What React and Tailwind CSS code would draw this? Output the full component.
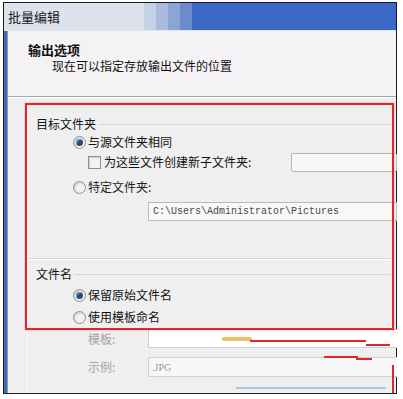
import React from "react";

const cjk = "font-['Noto_Sans_CJK_SC','Noto_Sans',sans-serif]";

function Radio({ checked }) {
  return (
    <span className="flex h-[13px] w-[13px] shrink-0 items-center justify-center rounded-full border border-[#8e9296] bg-[#f2f2f2] shadow-[inset_1px_1px_2px_#c8c8c8]">
      {checked && <span className="h-[7px] w-[7px] rounded-full bg-[#2a4b6c] shadow-[inset_1px_1px_1px_#86a9c6]" />}
    </span>
  );
}

function Checkbox() {
  return <span className="h-[13px] w-[13px] shrink-0 border border-[#8f8f8f] bg-[#f4f4f4] shadow-[inset_1px_1px_2px_#cdcdcd]" />;
}

function SectionTitle({ children }) {
  return (
    <div className="flex h-[14px] items-center">
      <span className="pl-[8px] pr-[2px] leading-[14px]">{children}</span>
      <span className="h-px flex-1 bg-[#d6d6d6]" />
    </div>
  );
}

function Option({ checked, children, className = "" }) {
  return (
    <div className={`flex h-[14px] items-center pl-[45px] ${className}`}>
      <Radio checked={checked} />
      <span className="pl-[2px] leading-[14px]">{children}</span>
    </div>
  );
}

export default function App() {
  return (
    <div className={`h-[399px] w-[403px] bg-white pl-[3px] pt-[2px] text-[12px] text-[#111] ${cjk}`}>
      <div className="relative flex h-[392px] w-[394px] flex-col border border-[#1b1b1b]">
        {/* title bar: pale behind the caption, Aero blue toward the right */}
        <div className="flex h-[28px] w-full shrink-0 border-b border-[#dfe6f0]">
          <div className="flex w-[140px] items-center bg-[#dde3ec] pl-[4px] text-[13px] leading-[14px] text-[#1a1a1a]">
            批量编辑
          </div>
          <div className="w-[12px] bg-[#c6d2e5]" />
          <div className="w-[12px] bg-[#a9bcde]" />
          <div className="w-[12px] bg-[#8aa5d6]" />
          <div className="w-[12px] bg-[#6b8ccc]" />
          <div className="w-[68px] bg-slate-500">
            <div className="h-full bg-blue-600/50" />
          </div>
          <div className="w-[68px] bg-slate-500">
            <div className="h-full bg-blue-600/50" />
          </div>
          <div className="w-[68px] bg-slate-500">
            <div className="h-full bg-blue-600/50" />
          </div>
        </div>

        <div className="flex flex-1 border-l-[3px] border-[#3d6cc0]">
          <div className="flex flex-1 flex-col border-l border-[#9a9a9a]">
            {/* header */}
            <div className="h-[66px] border-b border-[#a8a8a8] bg-[#f4f2f4] pl-[20px] pt-[12px]">
              <div className="text-[13px] font-bold leading-[14px]">输出选项</div>
              <div className="pl-[24px] pt-[2px] leading-[14px]">现在可以指定存放输出文件的位置</div>
            </div>

            {/* body */}
            <div className="flex flex-1 flex-col border-t border-white bg-[#efeff0] pl-[19px] pr-[5px]">
              <div className="flex flex-1 flex-col border-l border-[#fbfbfb]">
                <div className="mt-[19px]">
                  <SectionTitle>目标文件夹</SectionTitle>
                </div>
                <Option checked className="mt-[4px]">与源文件夹相同</Option>
                <div className="mt-[3px] flex h-[20px] items-center pl-[60px]">
                  <Checkbox />
                  <span className="pl-[3px] leading-[14px]">为这些文件创建新子文件夹:</span>
                  <span className="ml-auto mr-[-6px] h-[19px] w-[106px] rounded-[2px] border border-[#b7b7b7] bg-[#f7f7f7]" />
                </div>
                <Option className="mt-[8px] text-[#222]">特定文件夹:</Option>
                <div className="mt-[8px] flex pl-[120px]">
                  <div className="mr-[-6px] flex h-[19px] flex-1 items-center border border-[#b9b9b9] bg-[#f8f8f8] pl-[4px] font-['Liberation_Mono',monospace] text-[10px] text-[#4a4a4a]">
                    C:\Users\Administrator\Pictures
                  </div>
                </div>

                <div className="mt-[37px] h-px bg-[#d8d8d8]" />
                <div className="h-px bg-white" />

                <div className="mt-[7px]">
                  <SectionTitle>文件名</SectionTitle>
                </div>
                <Option checked className="mt-[7px]">保留原始文件名</Option>
                <Option className="mt-[8px]">使用模板命名</Option>

                <div className="mt-[5px] flex h-[19px] items-center pl-[60px] text-[#a4a4a4]">
                  <span className="w-[60px] leading-[14px]">模板:</span>
                  <span className="mr-[-6px] h-[19px] flex-1 border border-r-0 border-[#cfcfcf] bg-white" />
                </div>
                <div className="mt-[9px] flex h-[20px] items-center pl-[60px] text-[#a4a4a4]">
                  <span className="w-[60px] leading-[14px]">示例:</span>
                  <span className="mr-[-6px] flex h-[20px] flex-1 items-center border border-r-0 border-[#cfcfcf] bg-[#f7f7f7] pl-[3px] font-['Liberation_Serif',serif] text-[10px] text-[#9a9a9a]">
                    .JPG
                  </span>
                </div>
              </div>
            </div>
          </div>
        </div>

        {/* red annotation */}
        <div className="pointer-events-none absolute left-[21px] top-[100px] h-[227px] w-[369px] border-2 border-[#e1252b] shadow-[0_0_2px_#f3a0a0]" />
        <div className="pointer-events-none absolute left-[218px] top-[334px] h-[4px] w-[30px] rounded-full bg-[#f0c060]" />
        <div className="pointer-events-none absolute left-[246px] top-[337px] h-[2px] w-[116px] bg-[#e1252b]" />
        <div className="pointer-events-none absolute left-[362px] top-[341px] h-[2px] w-[24px] bg-[#e1252b]" />
        <div className="pointer-events-none absolute left-[320px] top-[353px] h-[2px] w-[34px] bg-[#e1252b]" />
        <div className="pointer-events-none absolute left-[352px] top-[355px] h-[2px] w-[16px] bg-[#e1252b]" />
        <div className="pointer-events-none absolute left-[388px] top-[362px] h-[28px] w-[2px] bg-[#e1252b]" />
        <div className="pointer-events-none absolute left-[232px] top-[384px] h-[2px] w-[150px] bg-[#a9c4e4]" />
      </div>
    </div>
  );
}
